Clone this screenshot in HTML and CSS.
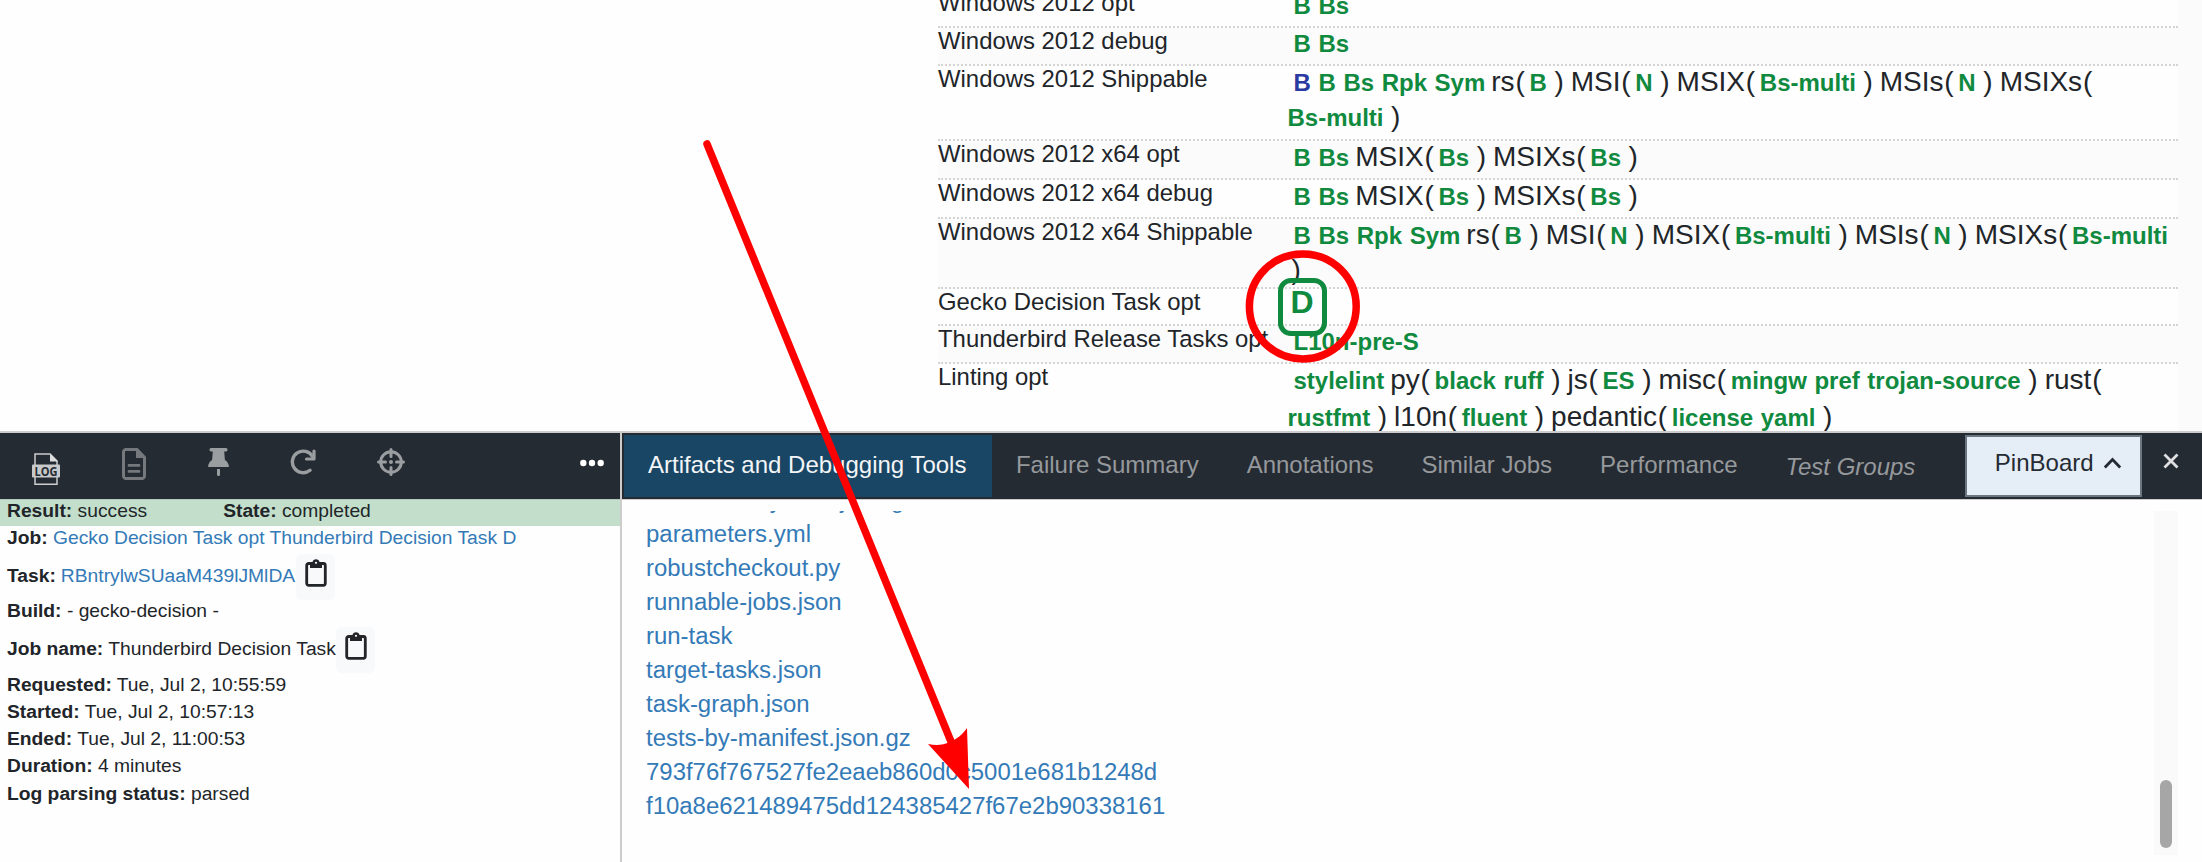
FILE: index.html
```
<!DOCTYPE html>
<html lang="en">
<head>
<meta charset="utf-8">
<title>Treeherder</title>
<link rel="stylesheet" href="styles.css">
</head>
<body>
<div class="app">
  <main class="push">
    <div class="platforms">
      <div class="row h27"><span class="name">Windows 2012 opt</span><div class="jobs"><div class="line first"><b>B</b><b>Bs</b></div></div></div>
      <div class="row h38 alt"><span class="name">Windows 2012 debug</span><div class="jobs"><div class="line first"><b>B</b><b>Bs</b></div></div></div>
      <div class="row h75"><span class="name">Windows 2012 Shippable</span><div class="jobs"><div class="line first"><b class="blue">B</b><b>B</b><b>Bs</b><b>Rpk</b><b>Sym</b><span class="group">rs<i>(</i><b>B</b>)</span><span class="group">MSI<i>(</i><b>N</b>)</span><span class="group">MSIX<i>(</i><b>Bs-multi</b>)</span><span class="group">MSIs<i>(</i><b>N</b>)</span><span class="group">MSIXs<i>(</i></span></div><div class="line"><b>Bs-multi</b>)</div></div></div>
      <div class="row h39 alt"><span class="name">Windows 2012 x64 opt</span><div class="jobs"><div class="line first"><b>B</b><b>Bs</b><span class="group">MSIX<i>(</i><b>Bs</b>)</span><span class="group">MSIXs<i>(</i><b>Bs</b>)</span></div></div></div>
      <div class="row h39"><span class="name">Windows 2012 x64 debug</span><div class="jobs"><div class="line first"><b>B</b><b>Bs</b><span class="group">MSIX<i>(</i><b>Bs</b>)</span><span class="group">MSIXs<i>(</i><b>Bs</b>)</span></div></div></div>
      <div class="row h70 alt"><span class="name">Windows 2012 x64 Shippable</span><div class="jobs"><div class="line first"><b>B</b><b>Bs</b><b>Rpk</b><b>Sym</b><span class="group">rs<i>(</i><b>B</b>)</span><span class="group">MSI<i>(</i><b>N</b>)</span><span class="group">MSIX<i>(</i><b>Bs-multi</b>)</span><span class="group">MSIs<i>(</i><b>N</b>)</span><span class="group">MSIXs<i>(</i><b>Bs-multi</b></span></div><div class="line wrapped">)</div></div></div>
      <div class="row h37"><span class="name">Gecko Decision Task opt</span><div class="jobs"><span class="selected">D</span></div></div>
      <div class="row h38 alt"><span class="name">Thunderbird Release Tasks opt</span><div class="jobs"><div class="line first"><b>L10n-pre-S</b></div></div></div>
      <div class="row h70"><span class="name">Linting opt</span><div class="jobs loose"><div class="line first"><b>stylelint</b><span class="group">py<i>(</i><b>black</b><b>ruff</b>)</span><span class="group">js<i>(</i><b>ES</b>)</span><span class="group">misc<i>(</i><b>mingw</b><b>pref</b><b>trojan-source</b>)</span><span class="group">rust<i>(</i></span></div><div class="line"><b>rustfmt</b><span class="group tail">)</span><span class="group">l10n<i>(</i><b>fluent</b>)</span><span class="group">pedantic<i>(</i><b>license</b><b>yaml</b>)</span></div></div></div>
    </div>
    <div class="gutter"></div>
  </main>
  <section class="details">
    <div class="summary">
      <nav class="actions">
        <svg class="icon i1" width="28" height="32" viewBox="0 0 28 32"><path d="M3 12V1h15l7 7v4M3 24v7.200h22V24" fill="none" stroke="#cbcccd" stroke-width="1.500"/><path d="M18 .500v8h8z" fill="#dcdddd"/><rect y="11.500" width="28" height="13" rx="1" fill="#c8c9ca"/><text x="14" y="22.600" text-anchor="middle" textLength="23" lengthAdjust="spacingAndGlyphs" class="logtext">LOG</text></svg>
        <svg class="icon i2" width="24" height="32" viewBox="0 0 384 512" preserveAspectRatio="none"><path fill="#75797e" d="M64 0C29 0 0 29 0 64v384c0 35 29 64 64 64h256c35 0 64-29 64-64V160H256c-18 0-32-14-32-32V0zm0 48h160v80c0 18 14 32 32 32h80v288c0 9-7 16-16 16H64c-9 0-16-7-16-16V64c0-9 7-16 16-16zM224 0v128c0 18 14 32 32 32h128L224 0z" fill-rule="evenodd"/><path d="M224 0v160h160v-20L250 0z" fill="#75797e"/><path d="M112 278h160M112 374h160" stroke="#75797e" stroke-width="44" stroke-linecap="round"/></svg>
        <svg class="icon i3" width="21" height="28" viewBox="0 0 21 28"><path fill="#9b9ea1" d="M3 0h15c2 0 2 3.500 0 3.500h-1.800l.7 8.500c2.200 1.200 3.500 3.200 4.100 6.200c0 .5-.4.800-.8.800H.8c-.4 0-.8-.3-.8-.8.6-3 1.900-5 4.100-6.200l.7-8.500H3C1 3.500 1 0 3 0zM9 21h3v5.500c0 2-3 2-3 0z"/></svg>
        <svg class="icon i4" width="27" height="26" viewBox="0 0 27 26"><path d="M22.500 7.500A10.800 10.800 0 1 0 20 21.300" fill="none" stroke="#9b9ea1" stroke-width="3.400" stroke-linecap="round"/><path d="M24 2v8h-7.500" fill="none" stroke="#9b9ea1" stroke-width="3.200" stroke-linecap="round" stroke-linejoin="round"/></svg>
        <svg class="icon i5" width="28" height="28" viewBox="0 0 28 28"><g fill="none" stroke="#9b9ea1" stroke-width="3" stroke-linecap="round"><circle cx="14" cy="14" r="10.300"/><path d="M14 1.500v7M14 19.500v7M1.500 14h7M19.500 14h7"/></g><circle cx="14" cy="14" r="2" fill="#9b9ea1"/></svg>
        <svg class="dots" width="24" height="8" viewBox="0 0 24 8"><g fill="#fff"><circle cx="3.300" cy="4" r="3.200"/><circle cx="12" cy="4" r="3.200"/><circle cx="20.700" cy="4" r="3.200"/></g></svg>
      </nav>
      <div class="result"><span><strong>Result:</strong> success</span><span><strong>State:</strong> completed</span></div>
      <ul class="facts">
        <li class="job"><strong>Job:</strong> <a>Gecko Decision Task opt Thunderbird Decision Task D</a></li>
        <li class="task"><strong>Task:</strong> <a>RBntrylwSUaaM439lJMlDA</a><span class="copy"><svg width="22" height="28" viewBox="0 0 22 28"><rect x="1.700" y="4.500" width="18.600" height="21.800" rx="2" fill="none" stroke="#212529" stroke-width="2.800"/><path fill="#212529" d="M5 9V3h2.500a3.600 3.600 0 0 1 7 0H17v6z"/><circle cx="11" cy="3.800" r="1.100" fill="#f8f9fa"/></svg></span></li>
        <li class="build"><strong>Build:</strong> - gecko-decision -</li>
        <li class="task"><strong>Job name:</strong> Thunderbird Decision Task<span class="copy"><svg width="22" height="28" viewBox="0 0 22 28"><rect x="1.700" y="4.500" width="18.600" height="21.800" rx="2" fill="none" stroke="#212529" stroke-width="2.800"/><path fill="#212529" d="M5 9V3h2.500a3.600 3.600 0 0 1 7 0H17v6z"/><circle cx="11" cy="3.800" r="1.100" fill="#f8f9fa"/></svg></span></li>
        <li><strong>Requested:</strong> Tue, Jul 2, 10:55:59</li>
        <li><strong>Started:</strong> Tue, Jul 2, 10:57:13</li>
        <li><strong>Ended:</strong> Tue, Jul 2, 11:00:53</li>
        <li><strong>Duration:</strong> 4 minutes</li>
        <li class="last"><strong>Log parsing status:</strong> parsed</li>
      </ul>
    </div>
    <div class="tabs-panel">
      <nav class="tabs">
        <span class="tab active">Artifacts and Debugging Tools</span>
        <span class="tab">Failure Summary</span>
        <span class="tab">Annotations</span>
        <span class="tab">Similar Jobs</span>
        <span class="tab">Performance</span>
        <span class="tab groups">Test Groups</span>
        <span class="pin">PinBoard<svg width="19" height="12" viewBox="0 0 19 12"><path d="M1.800 10.500 9.500 2.500l7.700 8" fill="none" stroke="#252b33" stroke-width="2.800"/></svg></span>
        <svg class="close" width="16" height="16" viewBox="0 0 16 16"><path d="M1.500 1.500l13 13M14.500 1.500l-13 13" stroke="#dee0e2" stroke-width="2.800"/></svg>
      </nav>
      <div class="scroller">
        <div class="artifacts">
          <a>manifests-by-task.json.gz</a>
          <a>parameters.yml</a>
          <a>robustcheckout.py</a>
          <a>runnable-jobs.json</a>
          <a>run-task</a>
          <a>target-tasks.json</a>
          <a>task-graph.json</a>
          <a>tests-by-manifest.json.gz</a>
          <a>793f76f767527fe2eaeb860d0c5001e681b1248d</a>
          <a>f10a8e621489475dd124385427f67e2b90338161</a>
        </div>
        <div class="track"><div class="thumb"></div></div>
      </div>
    </div>
  </section>
  <svg class="marks" width="2202" height="862" viewBox="0 0 2202 862">
    <ellipse cx="1302.800" cy="306.400" rx="53.400" ry="52.500" fill="none" stroke="#f00" stroke-width="7.500"/>
    <path d="M707 144 952 744" stroke="#f00" stroke-width="7.500" stroke-linecap="round"/>
    <path d="M969 789 928 744c9 2 15 1 22-2 7-3 12-7 17-14z" fill="#f00"/>
  </svg>
</div>
</body>
</html>
```
FILE: styles.css
```
* { box-sizing: border-box; }
body { margin: 0; font-family: "Liberation Sans", Arial, sans-serif; color: #212529; background: #fefefe; }
.app { position: relative; width: 2202px; height: 862px; overflow: hidden; display: flex; flex-direction: column; }
.push { height: 431px; display: flex; overflow: hidden; flex: none; }
.platforms { width: 1239.500px; margin-left: 938px; }
.gutter { flex: 1; background: #fbfbfb; }
.row { display: flex; border-bottom: 2px dotted #d4d4d4; white-space: nowrap; }
.row:last-child { border-bottom: 0; }
.alt { background: #fbfbfb; }
.h27 { height: 28px; }
.h27 .name, .h27 .line { margin-top: -10px; }
.h37 { height: 37px; }
.h38 { height: 38px; }
.h39 { height: 39px; }
.h75 { height: 75px; }
.h70 { height: 70px; }
.name { width: 349.500px; font-size: 23.900px; line-height: 25px; flex: none; }
.jobs { position: relative; font-size: 28px; }
.line { height: 35px; line-height: 31px; display: flex; align-items: baseline; }
.loose .line { height: 37px; }
.first { padding-left: 6px; }
.wrapped { padding-left: 4px; }
.line b { font-size: 24px; color: #108a3e; margin-right: 7.600px; }
.line .blue { color: #2a3aa0; }
.group { margin-left: -1.600px; margin-right: 8.600px; }
.tail { margin-left: 0; }
.group i { font-style: normal; margin-left: .800px; margin-right: 4.700px; }
.selected { position: absolute; left: -10px; top: -11px; width: 49px; height: 58px; border: 5px solid #108a3e; border-radius: 13px; font: bold 32px/38px "Liberation Sans", Arial, sans-serif; color: #108a3e; text-align: center; }
.details { flex: 1; display: flex; border-top: 2px solid #ccc; }
.summary { width: 622px; border-right: 2px solid #ccc; }
.actions { height: 66px; background: #252b33; display: flex; align-items: flex-start; }
.icon { flex: none; }
.i1 { margin: 20px 0 0 32px; }
.i2 { margin: 15px 0 0 62px; }
.i3 { margin: 15px 0 0 62px; }
.i4 { margin: 16px 0 0 61px; }
.i5 { margin: 15px 0 0 60px; }
.dots { margin: 26px 16px 0 auto; }
.logtext { font: bold 13px "Open Sans", sans-serif; fill: #252b33; }
.result { height: 27px; background: #c3dfcc; border-top: 1px solid #b4c9bb; padding-left: 7px; font-size: 19.250px; line-height: 22px; display: flex; gap: 76px; }
.facts { list-style: none; margin: 0; padding: 0 0 0 7px; font-size: 19.250px; white-space: nowrap; }
.facts li { height: 27px; line-height: 24px; }
.facts a { color: #337ab7; }
.facts .job { height: 28px; line-height: 23px; }
.facts .task { height: 46px; line-height: 43px; display: flex; gap: 5px; }
.facts .build { line-height: 22px; }
.facts .last { line-height: 26px; }
.copy { width: 39px; height: 46px; margin-left: -4.500px; background: #f8f9fa; border-radius: 6px; padding: 5px 0 0 9px; }
.copy svg { display: block; }
.tabs-panel { flex: 1; }
.tabs { height: 67px; background: #252b33; border-bottom: 1px solid #ccc; padding: 2px 0 2px 2px; display: flex; font-size: 24px; color: #96999c; line-height: 60px; white-space: nowrap; }
.tab { padding: 0 24px; }
.active { background: #1a4665; color: #f3f5f7; padding-right: 25.500px; }
.groups { font-style: italic; line-height: 64px; }
.pin { width: 177px; height: 62px; margin-left: 25.500px; border: 2px solid #6c7680; background: #e5edf6; color: #252b33; padding-left: 28px; line-height: 52px; display: flex; gap: 9px; }
.pin svg { margin-top: 20px; }
.close { margin: 18px 0 0 21.500px; }
.scroller { margin-top: 11px; height: 344px; display: flex; overflow: hidden; }
.artifacts { flex: 1; padding-left: 24px; margin-top: -28px; }
.artifacts a { display: block; color: #337ab7; font-size: 23.950px; line-height: 34px; }
.track { width: 24px; margin-right: 24px; background: #fafafa; padding: 269px 6px 0; }
.thumb { height: 68px; border-radius: 6px; background: #a6a6a6; }
.marks { position: absolute; left: 0; top: 0; }
```
